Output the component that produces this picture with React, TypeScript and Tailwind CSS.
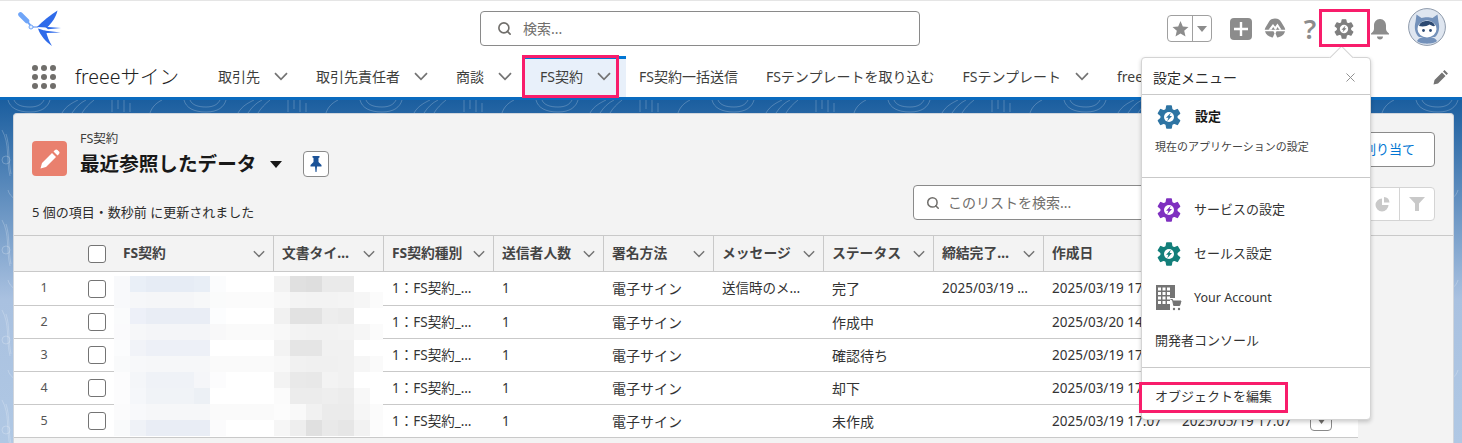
import { Search, X } from 'lucide-react'

const GRID = 'grid grid-cols-[66px_35px_159px_110px_110px_110px_110px_110px_110px_110px_130px_126px_58px]'

const rows = [
  { n: 1, msg: '送信時のメ…', status: '完了', done: '2025/03/19 …', created: '2025/03/19 17:07', updated: '2025/03/19 17:07' },
  { n: 2, msg: '', status: '作成中', done: '', created: '2025/03/20 14:12', updated: '2025/03/20 14:12' },
  { n: 3, msg: '', status: '確認待ち', done: '', created: '2025/03/19 17:07', updated: '2025/03/19 17:07' },
  { n: 4, msg: '', status: '却下', done: '', created: '2025/03/19 17:07', updated: '2025/03/19 17:07' },
  { n: 5, msg: '', status: '未作成', done: '', created: '2025/03/19 17:07', updated: '2025/05/19 17:07' },
]

const headers = ['FS契約', '文書タイ…', 'FS契約種別', '送信者人数', '署名方法', 'メッセージ', 'ステータス', '締結完了…']

// blurred cells in the reference, one entry per 16px block
const mosaicName = [
  ['f8f9fb', 'e9eff7', 'e6ecf5', 'e6ecf5', 'e6ecf5', 'e8eef6', 'fbfcfd', 'ffffff', 'ffffff', 'ffffff'],
  ['f8f9fb', 'f6f7f9', 'f5f6f8', 'f5f6f8', 'f5f6f8', 'f7f8f9', 'fafbfb', 'fbfbfb', 'fbfbfb', 'fbfbfb'],
  ['fafbfc', 'edf0f8', 'e9edf5', 'e9edf5', 'e9edf5', 'e9edf5', 'fcfdfe', 'ffffff', 'ffffff', 'ffffff'],
  ['fafafc', 'f6f7f9', 'f4f5f8', 'f4f5f8', 'f4f5f8', 'f4f5f8', 'f8f8f9', 'fafafa', 'fafafa', 'fafafa'],
  ['fbfcfd', 'f1f3f8', 'edf0f7', 'edf0f7', 'edf0f7', 'edf0f7', 'ffffff', 'ffffff', 'ffffff', 'ffffff'],
  ['f9fafb', 'f7f8fa', 'f6f7f9', 'f6f7f9', 'f6f7f9', 'f6f7f9', 'fafafa', 'fafafa', 'fafafa', 'fafafa'],
  ['fcfcfd', 'f4f6f9', 'eff2f7', 'eff2f7', 'eff2f7', 'f5f6f9', 'fcfcfd', 'ffffff', 'ffffff', 'ffffff'],
  ['fcfcfd', 'f5f7fa', 'f0f3f7', 'f0f3f7', 'f0f3f7', 'ecf0f5', 'ffffff', 'ffffff', 'ffffff', 'ffffff'],
  ['fbfbfc', 'f8f9fb', 'f6f7f9', 'f6f7f9', 'f6f7f9', 'f6f7f9', 'fafafa', 'fafafa', 'fafafa', 'fafafa'],
  ['f9fafb', 'eff2f7', 'e9edf5', 'e9edf5', 'e9edf5', 'e9edf5', 'fbfbfc', 'ffffff', 'ffffff', 'ffffff'],
]

const mosaicTitle = [
  ['f2f2f2', 'e0e0e0', 'dedede', 'eaeaea', 'eaeaea', 'ffffff', 'ffffff'],
  ['f8f8f8', 'f4f4f4', 'f3f3f3', 'f3f3f3', 'f4f4f4', 'f6f6f6', 'fbfbfb'],
  ['f1f1f1', 'e2e2e2', 'e2e2e2', 'ededed', 'ebebeb', 'ffffff', 'ffffff'],
  ['f8f8f8', 'f3f3f3', 'f2f2f2', 'f2f2f2', 'f3f3f3', 'f6f6f6', 'fbfbfb'],
  ['f3f3f3', 'e5e5e5', 'e5e5e5', 'f1f1f1', 'f1f1f1', 'ffffff', 'ffffff'],
  ['f8f8f8', 'f1f1f1', 'f0f0f0', 'f0f0f0', 'f1f1f1', 'f6f6f6', 'fafafa'],
  ['f3f3f3', 'e9e9e9', 'e8e8e8', 'f3f3f3', 'f1f1f1', 'ffffff', 'ffffff'],
  ['fbfbfb', 'ececec', 'ececec', 'eeeeee', 'ececec', 'f8f8f8', 'ffffff'],
  ['fcfcfc', 'f9f9f9', 'f1f1f1', 'ebebeb', 'ebebeb', 'f6f6f6', 'fbfbfb'],
  ['f6f6f6', 'eeeeee', 'e0e0e0', 'e9e9e9', 'e6e6e6', 'f2f2f2', 'fcfcfc'],
]

function gearPath(cx: number, cy: number, outer: number, inner: number) {
  const pts: string[] = []
  for (let i = 0; i < 6; i++) {
    const a = (-90 + i * 60) * (Math.PI / 180)
    const at = (r: number, d: number) => `${(cx + r * Math.cos(a + d)).toFixed(2)} ${(cy + r * Math.sin(a + d)).toFixed(2)}`
    pts.push(at(inner, -0.36), at(outer, -0.2), at(outer, 0.2), at(inner, 0.36))
  }
  return `M${pts.join('L')}Z`
}

function Gear({ color, size = 24 }: { color: string; size?: number }) {
  return (
    <svg width={size} height={size} viewBox="0 0 24 24" className="shrink-0">
      <path d={gearPath(12, 12, 11.2, 8)} fill={color} stroke={color} strokeWidth="1.4" strokeLinejoin="round" />
      <circle cx="12" cy="12" r="5" fill="#fff" />
      <path d="M13.8 7.800 9 12.800h2.400L10.200 16.200l4.800-5.100h-2.400z" fill={color} />
    </svg>
  )
}

function Chevron({ small }: { small?: boolean }) {
  return (
    <svg width={small ? 12 : 14} height={small ? 8 : 9} viewBox="0 0 14 9" className="shrink-0">
      <polyline points="1,1.2 7,7.4 13,1.2" fill="none" stroke="#747474" strokeWidth="1.7" />
    </svg>
  )
}

function Logo() {
  return (
    <svg width="46" height="38" viewBox="18 10 46 38" className="shrink-0">
      <path d="M20.500 14.500 27 21" stroke="#6fa5f8" strokeWidth="4.600" strokeLinecap="round" />
      <path d="M27 21 30.500 25.500" stroke="#6fa5f8" strokeWidth="2" />
      <circle cx="31" cy="27" r="2" fill="#e6efff" stroke="#6fa5f8" strokeWidth="1" />
      <path d="M33 27H38" stroke="#3f7bec" strokeWidth=".9" />
      <path d="M57.500 10.500C56 17 52 23 47 27.500L37 27C43 21 50 15 57.500 10.500Z" fill="#2f6bea" />
      <path d="M38 28.500 46 31C47 36 49 41 52 46C46 42 40 35 38 28.500Z" fill="#2f6bea" />
      <path d="M45 26.800 61 28 48 29.200Z" fill="#2f6bea" />
      <path d="M44 30.500 60.500 32.400 46 33Z" fill="#2f6bea" />
    </svg>
  )
}

function TrailheadIcon() {
  return (
    <svg width="22" height="21" viewBox="0 0 22 21" className="shrink-0">
      <path d="M11 .5C7.500.5 6 2 4.500 4.500L1.500 9.500c-.5 1-.7 1.500-.7 2.300h20.400c0-.8-.2-1.300-.7-2.300l-3-5C16 2 14.500.5 11 .5Z" fill="#8c8c8c" />
      <path d="M4.500 11.800 9 6l2.200 2.800L13.500 5.500l4 6.300z" fill="#fff" />
      <path d="M7.500 11.800 9.200 9l1.800 2.800zM12 11.800l1.600-2.800 1.700 2.800z" fill="#8c8c8c" />
      <path d="M1 13.300h8.500l1 2.200-1.700 3.900C5 19 1.800 17 1 13.300ZM12.500 13.300H21c-.8 3.700-4 5.700-7.800 6.100l-1.700-3.900z" fill="#8c8c8c" />
    </svg>
  )
}

function Avatar() {
  return (
    <svg width="38" height="38" viewBox="0 0 38 38" className="shrink-0">
      <circle cx="19" cy="19" r="18.400" fill="#dfe6f0" stroke="#8e9aab" strokeWidth="1" />
      <path d="M8.500 6.500 13.500 10C16.500 9 21.500 9 24.500 10L29.500 6.500 30.500 14C32 19 31 26 27 29H11C7 26 6 19 7.500 14Z" fill="#7391ba" />
      <path d="M9 33C12 27 26 27 29 33 26 36.500 12 36.500 9 33Z" fill="#7391ba" />
      <ellipse cx="19" cy="21" rx="9.500" ry="8.500" fill="#fff" />
      <path d="M11 18C12 14 15.500 13 19 13S26 14 27 18C25 18.500 23 17.500 21.500 16.500 19 18.500 14 19 11 18Z" fill="#2d4a73" />
      <circle cx="15.500" cy="22.500" r="1.400" fill="#2d4a73" />
      <circle cx="22.500" cy="22.500" r="1.400" fill="#2d4a73" />
    </svg>
  )
}

function AccountIcon() {
  return (
    <svg width="26" height="26" viewBox="0 0 26 26" className="shrink-0">
      <rect x="0" y="0" width="19" height="25" fill="#747474" />
      {[2, 6.5, 11].map(x =>
        [2.5, 7, 11.5, 16].map(y => <rect key={`${x}-${y}`} x={x} y={y} width="3" height="3" fill="#fff" />),
      )}
      <rect x="14" y="13" width="12" height="13" fill="#fff" />
      <path d="M14.500 14.500h2l1.200 6h6l1.300-4.500h-8" fill="#747474" stroke="#747474" strokeWidth="1" />
      <circle cx="18" cy="24" r="1.200" fill="#747474" />
      <circle cx="23" cy="24" r="1.200" fill="#747474" />
    </svg>
  )
}

function Mosaic({ data, className }: { data: string[][]; className: string }) {
  return (
    <div className={`absolute top-[4px] overflow-hidden ${className}`}>
      {data.map((line, y) => (
        <div key={y} className="flex">
          {line.map((c, x) => (
            <div key={x} className="w-[16px] h-[16px] shrink-0" style={{ backgroundColor: `#${c}` }} />
          ))}
        </div>
      ))}
    </div>
  )
}

function NavItem({ label, menu = true }: { label: string; menu?: boolean }) {
  return (
    <div className="flex items-center gap-[14px] shrink-0">
      <span>{label}</span>
      {menu && <Chevron />}
    </div>
  )
}

function Checkbox() {
  return <div className="w-[18px] h-[18px] rounded-[3px] border border-[#747474] bg-white" />
}

function Highlight({ className }: { className: string }) {
  return <div className={`absolute z-20 border-[3px] border-[#f81d6b] pointer-events-none ${className}`} />
}

export default function App() {
  return (
    <div className="relative w-[1462px] h-[443px] overflow-hidden bg-white font-['Noto_Sans','Noto_Sans_CJK_JP',sans-serif] text-[#2b2b2b]">
      {/* Global header */}
      <header className="border-t border-[#e5e5e5] border-b-[3px] border-b-[#0a6bbf] bg-white">
        <div className="flex items-center h-[55px] pl-[18px]">
          <Logo />
          <div className="flex items-center ml-[416px] w-[440px] h-[35px] rounded-[4px] border border-[#8a8a8a] pl-[16px] gap-[11px] text-[14px] text-[#706e6b]">
            <Search size={15} strokeWidth={2.6} className="text-[#706e6b]" />
            <span>検索...</span>
          </div>
          <div className="flex items-center ml-[247px] w-[45px] h-[27px] rounded-[4px] border border-[#a0a0a0]">
            <div className="flex items-center justify-center w-[25px] h-full border-r border-[#a0a0a0]">
              <svg width="17" height="16" viewBox="0 0 17 16"><path d="M8.500 0l2.300 5.400 5.700.5-4.300 3.800 1.300 5.800-5-3-5 3 1.300-5.800L.5 5.900l5.700-.5z" fill="#8c8c8c" /></svg>
            </div>
            <div className="flex-1 flex justify-center">
              <svg width="10" height="6" viewBox="0 0 10 6"><path d="M0 0h10L5 6z" fill="#8c8c8c" /></svg>
            </div>
          </div>
          <div className="flex items-center justify-center ml-[18px] w-[22px] h-[22px] rounded-[4px] bg-[#8c8c8c]">
            <svg width="14" height="14" viewBox="0 0 14 14"><path d="M7 0v14M0 7h14" stroke="#fff" strokeWidth="2.400" /></svg>
          </div>
          <div className="ml-[12px]"><TrailheadIcon /></div>
          <span className="ml-[16px] w-[16px] text-center text-[27px] leading-none font-semibold text-[#8c8c8c]">?</span>
          <div className="ml-[16px]"><Gear color="#7f7f7f" size={20} /></div>
          <svg width="20" height="22" viewBox="0 0 20 22" className="ml-[16px] shrink-0">
            <path d="M10 1c3.800 0 6 3 6 6.500v3.500c0 2 1.500 3 3 4.500v1H1v-1c1.500-1.500 3-2.500 3-4.500V7.500C4 4 6.200 1 10 1z" fill="#8c8c8c" />
            <path d="M7 18.500h6c0 1.700-1.300 3-3 3s-3-1.300-3-3z" fill="#8c8c8c" />
          </svg>
          <div className="ml-[18px] -mt-[4px]"><Avatar /></div>
        </div>

        <div className="flex items-center h-[41px] pl-[32px] text-[14px] text-[#3e3e3c]">
          <div className="grid grid-cols-3 gap-[3px] shrink-0">
            {Array.from({ length: 9 }).map((_, i) => (
              <div key={i} className="w-[6px] h-[6px] rounded-full bg-[#706e6b]" />
            ))}
          </div>
          <div className="w-[143px] ml-[19px] text-[19.5px] font-light text-[#222] shrink-0">freeeサイン</div>
          <nav className="flex items-center gap-[28px] h-full flex-1 min-w-0 overflow-hidden">
            <NavItem label="取引先" />
            <NavItem label="取引先責任者" />
            <NavItem label="商談" />
            <div className="flex items-center gap-[14px] h-full -mx-[15px] px-[15px] pb-[3px] bg-[#e8f0fa] border-t-[3px] border-[#0176d3] shrink-0">
              <span>FS契約</span>
              <Chevron />
            </div>
            <NavItem label="FS契約一括送信" menu={false} />
            <NavItem label="FSテンプレートを取り込む" menu={false} />
            <NavItem label="FSテンプレート" />
            <NavItem label="freeeサイン設定" />
          </nav>
          <svg width="16" height="16" viewBox="0 0 16 16" className="mx-[13px] shrink-0">
            <path d="M11.500 1 15 4.500 13.500 6 10 2.500zM9 3.500l3.500 3.500-7.500 7.500L.5 15.500l1-4.500z" fill="#747474" />
          </svg>
        </div>
      </header>

      {/* Page body */}
      <main className="relative h-[343px] pl-[13px] pr-[8px] pt-[13px] bg-[linear-gradient(#1b5e9f,#a9c1e0_58%,#b0c8e4)]">
        <svg className="absolute inset-0 w-full h-full" aria-hidden="true">
          <defs>
            <pattern id="topo" width="176" height="90" patternUnits="userSpaceOnUse">
              <g fill="none" stroke="#fff" strokeOpacity=".22" strokeWidth="1">
                <path d="M8 0c2 8 10 12 22 12s18-5 20-12" />
                <path d="M14 0c2 5 8 7 16 7s12-3 14-7" />
                <path d="M62 13c4-7 10-10 16-13M72 13c4-6 8-10 14-13M82 13c3-5 7-9 12-13" />
                <path d="M112 0v12M118 0v9M124 0v12M130 3v9M150 13c2-6 6-10 12-13" />
                <path d="M2 30c8 14 4 30 8 46M6 34c4 12 2 26 5 40" />
                <circle cx="6" cy="60" r="4" />
              </g>
            </pattern>
          </defs>
          <rect width="100%" height="100%" fill="url(#topo)" />
        </svg>

        <section className="relative bg-[#f3f3f3] rounded-t-[4px] border border-[#d0d5dc] border-b-0 h-[330px]">
          {/* List header */}
          <div className="flex justify-between h-[121px]">
            <div className="flex flex-col pl-[18px] pt-[17px]">
              <div className="flex">
                <div className="flex items-center justify-center w-[35px] h-[35px] mt-[10px] rounded-[4px] bg-[#e9806e] shrink-0">
                  <svg width="22" height="22" viewBox="0 0 22 22">
                    <path d="M16 2c.8-.8 1.800-.8 2.500 0l1.500 1.500c.7.7.7 1.700 0 2.500l-1.500 1.500-4-4zM13 5l4 4-10 10-5.500 1.500L3 15z" fill="#fff" />
                  </svg>
                </div>
                <div className="ml-[13px]">
                  <div className="text-[12.5px] leading-[16px] text-[#3e3e3c]">FS契約</div>
                  <div className="flex items-center h-[34px]">
                    <span className="text-[19.6px] font-bold text-[#181818]">最近参照したデータ</span>
                    <svg width="12" height="7" viewBox="0 0 12 7" className="ml-[14px]"><path d="M0 0h12L6 7z" fill="#181818" /></svg>
                    <div className="flex items-center justify-center w-[26px] h-[26px] ml-[21px] rounded-[4px] border border-[#8a8a8a] bg-white">
                      <svg width="12" height="16" viewBox="0 0 12 16"><path d="M2.500 0h7v1.500L8.500 2v4l3 3v1.500H7L6.500 16h-1L5 10.500H.5V9l3-3V2l-1-.5z" fill="#1b5297" /></svg>
                    </div>
                  </div>
                </div>
              </div>
              <div className="mt-[23px] text-[13px] leading-[16px] text-[#2b2b2b]">5 個の項目・数秒前 に更新されました</div>
            </div>

            <div className="flex flex-col items-end pt-[18px] pr-[18px]">
              <div className="flex items-center h-[35px] px-[19px] rounded-[4px] border border-[#8a8a8a] bg-white text-[13px] text-[#0176d3]">割り当て</div>
              <div className="flex justify-between items-start w-[522px] mt-[18px]">
                <div className="flex items-center w-[252px] h-[35px] pl-[12px] gap-[8px] rounded-[4px] border border-[#8a8a8a] bg-white text-[14px] text-[#706e6b]">
                  <Search size={14} strokeWidth={2.6} />
                  <span>このリストを検索...</span>
                </div>
                <div className="flex h-[34px] mt-[2px] rounded-[4px] border border-[#d4d4d4] bg-white">
                  <div className="flex items-center justify-center w-[34px] border-r border-[#d4d4d4]">
                    <svg width="15" height="15" viewBox="0 0 15 15"><path d="M7 1.500a6.500 6.500 0 1 0 6.500 6.500H7z" fill="#c9c9c9" /><path d="M9 0v5.500h5.500A6 6 0 0 0 9 0z" fill="#c9c9c9" /></svg>
                  </div>
                  <div className="flex items-center justify-center w-[34px]">
                    <svg width="16" height="14" viewBox="0 0 16 14"><path d="M0 0h16L10 6.500V14H6V6.500z" fill="#c9c9c9" /></svg>
                  </div>
                </div>
              </div>
            </div>
          </div>

          {/* Table */}
          <div className="border-t border-[#c9c9c9]">
            <div className={`${GRID} w-[1344px] h-[36px] items-center border-b border-[#c9c9c9] text-[13.8px] font-bold text-[#444]`}>
              <div />
              <div className="flex justify-center pr-[1px]"><Checkbox /></div>
              {headers.map(h => (
                <div key={h} className="flex items-center justify-between h-full pl-[8px] pr-[8px] border-r border-[#c9c9c9] whitespace-nowrap overflow-hidden">
                  <span>{h}</span>
                  <Chevron small />
                </div>
              ))}
              <div className="flex items-center h-full pl-[8px] whitespace-nowrap">作成日</div>
            </div>
            <div className="relative w-[1344px]">
              {rows.map(r => (
                <div key={r.n} className={`${GRID} h-[33px] first:h-[34px] items-center bg-white border-b border-[#c9c9c9] text-[14px] text-[#333] whitespace-nowrap`}>
                  <div className="text-center text-[12.5px] text-[#555] pr-[6px]">{r.n}</div>
                  <div className="flex justify-center pr-[1px]"><Checkbox /></div>
                  <div />
                  <div />
                  <div className="pl-[8px] text-[13.5px]">1：FS契約_…</div>
                  <div className="pl-[8px] text-[13.5px]">1</div>
                  <div className="pl-[8px]">電子サイン</div>
                  <div className="pl-[8px] text-[13.5px]">{r.msg}</div>
                  <div className="pl-[8px]">{r.status}</div>
                  <div className="pl-[8px] text-[13.5px]">{r.done}</div>
                  <div className="pl-[8px] text-[13.5px]">{r.created}</div>
                  <div className="pl-[8px] text-[13.5px]">{r.updated}</div>
                  <div className="pl-[10px]">
                    <div className="flex items-center justify-center w-[22px] h-[20px] rounded-[4px] border border-[#8a8a8a] bg-white">
                      <svg width="9" height="6" viewBox="0 0 9 6"><path d="M0 0h9L4.500 6z" fill="#706e6b" /></svg>
                    </div>
                  </div>
                </div>
              ))}
              <Mosaic data={mosaicName} className="left-[100px] w-[160px]" />
              <Mosaic data={mosaicTitle} className="left-[260px] w-[109px]" />
            </div>
          </div>
        </section>
      </main>

      {/* Setup menu */}
      <div className="absolute z-10 left-[1141px] top-[57px] w-[230px] h-[363px] rounded-[4px] bg-white border border-[#d4d4d4] shadow-[0_2px_4px_rgba(0,0,0,0.2)]">
        <div className="absolute left-[191px] -top-[9px] w-[17px] h-[17px] rotate-45 bg-white border-l border-t border-[#d4d4d4]" />
        <div className="relative flex items-center justify-between h-[37px] pl-[11px] pr-[12px] pt-[2px] border-b border-[#c9c9c9] text-[14px] text-[#2b2b2b]">
          <span>設定メニュー</span>
          <X size={15} strokeWidth={1.5} className="text-[#8a8a8a]" />
        </div>
        <div className="h-[83px] pt-[10px] pl-[13px] border-b border-[#c9c9c9]">
          <div className="flex items-center gap-[14px] h-[24px] pl-[2px]">
            <Gear color="#2e74a3" />
            <span className="text-[13px] font-bold text-[#181818]">設定</span>
          </div>
          <div className="mt-[10px] text-[11px] text-[#444]">現在のアプリケーションの設定</div>
        </div>
        <div className="h-[190px] pt-[10px] border-b border-[#c9c9c9] text-[13px] text-[#333]">
          <div className="flex items-center gap-[13px] h-[44px] pl-[15px]">
            <Gear color="#7f30c0" />
            <span>サービスの設定</span>
          </div>
          <div className="flex items-center gap-[13px] h-[44px] pl-[15px]">
            <Gear color="#137f7a" />
            <span>セールス設定</span>
          </div>
          <div className="flex items-center gap-[12px] h-[44px] pl-[14px] text-[12.5px]">
            <AccountIcon />
            <span>Your Account</span>
          </div>
          <div className="flex items-center h-[42px] pl-[13px]">開発者コンソール</div>
        </div>
        <div className="flex items-center h-[44px] mt-[7px] pl-[13px] text-[13px] text-[#333]">オブジェクトを編集</div>
      </div>

      <Highlight className="left-[522px] top-[55px] w-[97px] h-[43px]" />
      <Highlight className="left-[1319px] top-[9px] w-[51px] h-[38px]" />
      <Highlight className="left-[1139px] top-[382px] w-[149px] h-[31px]" />
    </div>
  )
}
